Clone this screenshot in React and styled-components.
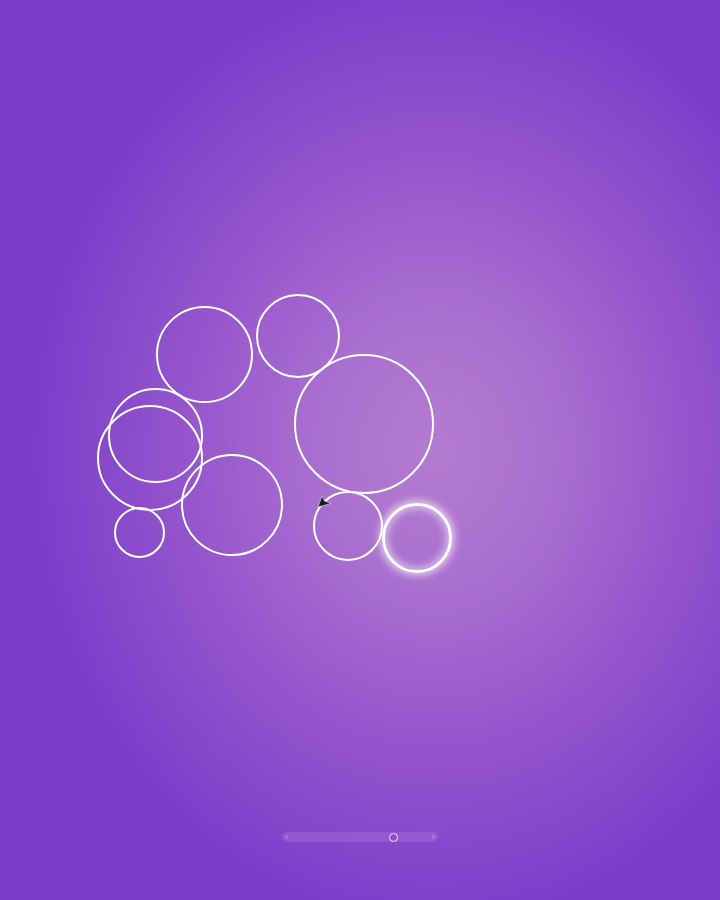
import React from 'react'
import styled, { createGlobalStyle } from 'styled-components'

const GlobalStyle = createGlobalStyle`
  html, body {
    margin: 0;
    padding: 0;
    height: 100%;
    overflow: hidden;
  }
  body {
    font-family: 'Liberation Sans', Arial, sans-serif;
  }
`

const bubbles = [
  { x: 204.5, y: 354, r: 48.5 },
  { x: 298, y: 335.5, r: 42 },
  { x: 364, y: 424, r: 70 },
  { x: 155.5, y: 435.5, r: 47.5 },
  { x: 150, y: 457.5, r: 53 },
  { x: 139.5, y: 532.5, r: 25.5 },
  { x: 232, y: 505, r: 51 },
  { x: 348, y: 525.5, r: 35 },
]

const App = () => {
  return (
    <>
      <GlobalStyle />
      <Stage>
        <Canvas>
          {bubbles.map((b, i) => (
            <Bubble key={i} $x={b.x} $y={b.y} $r={b.r} />
          ))}
          <Bubble $x={417} $y={538} $r={35} $active />
          <Pointer viewBox='0 0 16 14' width='16' height='14'>
            <polygon points='1,12 5,1 7.5,6 14,8.5' fill='#1d1a22' stroke='#fff' strokeWidth='0.5' />
          </Pointer>
        </Canvas>
        <Controls>
          <Track>
            <Chevron>‹</Chevron>
            <Thumb />
            <Chevron>›</Chevron>
          </Track>
        </Controls>
      </Stage>
    </>
  )
}

const Stage = styled.div`
  width: 100vw;
  height: 100vh;
  display: flex;
  flex-direction: column;
  background: radial-gradient(
    ellipse 400px 470px at 435px 450px,
    #b47ccf 0%,
    #a96fcf 30%,
    #9556cc 62%,
    #7c3eca 100%
  );
  background-color: #7b3cca;
`

const Canvas = styled.div`
  position: relative;
  flex: 1;
`

const Bubble = styled.div`
  position: absolute;
  left: ${(p) => p.$x - p.$r}px;
  top: ${(p) => p.$y - p.$r}px;
  width: ${(p) => p.$r * 2}px;
  height: ${(p) => p.$r * 2}px;
  box-sizing: border-box;
  border-radius: 50%;
  border: ${(p) => (p.$active ? '3.5px' : '2px')} solid #fff;
  box-shadow: ${(p) =>
    p.$active
      ? '0 0 9px 2px rgba(255,255,255,0.75), inset 0 0 9px 2px rgba(255,255,255,0.6)'
      : 'none'};
`

const Pointer = styled.svg`
  position: absolute;
  left: 317px;
  top: 495px;
`

const Controls = styled.div`
  display: flex;
  justify-content: center;
  padding-bottom: 58px;
`

const Track = styled.div`
  width: 156px;
  height: 10px;
  box-sizing: border-box;
  padding: 0 3px;
  border-radius: 5px;
  background: rgba(255, 255, 255, 0.1);
  display: flex;
  align-items: center;
  justify-content: space-between;
  position: relative;
`

const Chevron = styled.span`
  font-size: 10px;
  line-height: 10px;
  color: rgba(255, 255, 255, 0.45);
`

const Thumb = styled.div`
  position: absolute;
  left: 107px;
  top: 0.5px;
  width: 9px;
  height: 9px;
  box-sizing: border-box;
  border-radius: 50%;
  border: 1.5px solid #f2e6ff;
  background: #8a4fcf;
`

export default App
